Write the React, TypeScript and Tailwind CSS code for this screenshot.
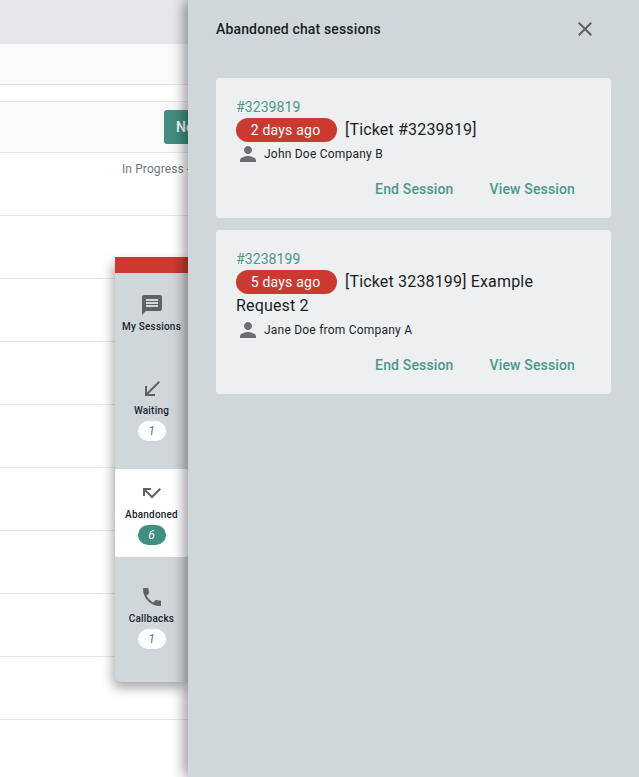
import React from "react";

const P = {
  message: "M20 2H4c-1.1 0-1.99.9-1.99 2L2 22l4-4h14c1.1 0 2-.9 2-2V4c0-1.1-.9-2-2-2zm-2 12H6v-2h12v2zm0-3H6V9h12v2zm0-3H6V6h12v2z",
  received: "M20 5.41L18.59 4 7 15.59V9H5v10h10v-2H8.41z",
  missed: "M19.59 7L12 14.59 6.41 9H11V7H3v8h2v-4.59l7 7 9-9z",
  phone: "M6.62 10.79c1.44 2.83 3.76 5.14 6.59 6.59l2.2-2.2c.27-.27.67-.36 1.02-.24 1.12.37 2.33.57 3.57.57.55 0 1 .45 1 1V20c0 .55-.45 1-1 1-9.39 0-17-7.61-17-17 0-.55.45-1 1-1h3.5c.55 0 1 .45 1 1 0 1.25.2 2.45.57 3.57.11.35.03.74-.25 1.02l-2.2 2.2z",
  person: "M12 12c2.21 0 4-1.79 4-4s-1.79-4-4-4-4 1.79-4 4 1.79 4 4 4zm0 2c-2.67 0-8 1.79-8 4v2h16v-2c0-2.21-5.33-4-8-4z",
  close: "M19 6.41L17.59 5 12 10.59 6.41 5 5 6.41 10.59 12 5 17.59 6.41 19 12 13.41 17.59 19 19 17.59 13.41 12z",
};

function Icon({ d, className }: { d: string; className: string }) {
  return (
    <svg viewBox="0 0 24 24" className={className} fill="currentColor">
      <path d={d} />
    </svg>
  );
}

function RailItem({
  icon, label, count, active, className,
}: { icon: string; label: string; count?: string; active?: boolean; className: string }) {
  return (
    <div className={`flex flex-col items-center ${active ? "bg-white rounded-[2px]" : ""} ${className}`}>
      <Icon d={icon} className="w-6 h-6 text-[#5f6368]" />
      <div className="text-[10px] leading-[14px] font-medium text-[#1c2430] mt-[3px] tracking-[0.2px]">{label}</div>
      {count && (
        <div className={`mt-[3px] w-7 h-5 rounded-full flex items-center justify-center text-[12px] italic ${active ? "bg-[#418f80] text-white" : "bg-white text-[#3d7f8c]"}`}>
          {count}
        </div>
      )}
    </div>
  );
}

function Card({ id, age, title, person }: { id: string; age: string; title: string; person: string }) {
  return (
    <div className="bg-[#edeff1] rounded-[4px] pl-5 pr-9 pt-[20px] pb-[19px]">
      <div className="text-[14px] leading-[18px] mb-[2px] text-[#4a9a8c] tracking-[0.1px]">{id}</div>
      <div className="text-[16px] leading-6 text-[#1a1f24] tracking-[0.17px]">
        <span className="inline-block align-top w-[101px] h-6 pr-[2px] rounded-full bg-[#cb3a30] text-white text-[14px] leading-6 text-center mr-2 tracking-[0.22px]">{age}</span>
        {title}
      </div>
      <div className="flex items-center h-6 text-[12px] text-[#1a1f24] tracking-[0.22px]">
        <Icon d={P.person} className="w-6 h-6 text-[#6a6e73] mr-1" />
        {person}
      </div>
      <div className="flex justify-end gap-9 mt-[13px] text-[14px] leading-5 font-medium text-[#4c998b] tracking-[0.15px]">
        <span>End Session</span>
        <span>View Session</span>
      </div>
    </div>
  );
}

export default function App() {
  return (
    <div className="relative h-[777px] w-[639px] overflow-hidden bg-white font-['Roboto',sans-serif]">
      <div className="h-11 bg-[#e5e7ea]" />
      <div className="h-[41px] bg-[#f8f9fb] border-b border-[#e4e6e8]" />
      <div className="h-[17px] bg-white border-b border-[#e4e6e8]" />
      <div className="h-[51px] bg-[#f8f9fb] border-b border-[#e4e6e8] flex items-center pl-[164px]">
        <div className="w-[48px] h-[34px] bg-[#418f80] rounded-[3px] text-white text-[14px] font-medium pl-3 leading-[34px] overflow-hidden shrink-0">New</div>
      </div>
      <div className="h-[63px] border-b border-[#e4e6e8] pt-[8px] pl-[122px] text-[12px] leading-4 text-[#6f7780] whitespace-nowrap tracking-[0.1px]">In Progress - Open</div>
      {[0, 1, 2, 3, 4, 5, 6, 7].map((i) => (
        <div key={i} className="h-[63px] border-b border-[#e4e6e8]" />
      ))}

      <div className="absolute left-[115px] top-[257px] w-[73px] h-[425px] bg-[#d0d7da] rounded-bl-[6px] shadow-[-2px_6px_12px_rgba(0,0,0,0.35)]">
        <div className="h-4 bg-[#cb3a30]" />
        <RailItem icon={P.message} label="My Sessions" className="pt-5" />
        <RailItem icon={P.received} label="Waiting" count="1" className="pt-[43px]" />
        <RailItem icon={P.missed} label="Abandoned" count="6" active className="mt-[28px] pt-3 h-[88px]" />
        <RailItem icon={P.phone} label="Callbacks" count="1" className="pt-[28px]" />
      </div>

      <div className="absolute right-0 top-0 bottom-0 w-[451px] bg-[#d0d7da] shadow-[-4px_0_12px_rgba(0,0,0,0.4)] pl-7 pr-7">
        <div className="flex items-center justify-between h-[58px]">
          <div className="text-[14px] font-medium text-[#1a1f24] tracking-[0.15px]">Abandoned chat sessions</div>
          <Icon d={P.close} className="w-6 h-6 text-[#5f6368] mr-[14px]" />
        </div>
        <div className="mt-5 flex flex-col gap-3">
          <Card id="#3239819" age="2 days ago" title="[Ticket #3239819]" person="John Doe Company B" />
          <Card id="#3238199" age="5 days ago" title="[Ticket 3238199] Example Request 2" person="Jane Doe from Company A" />
        </div>
      </div>
    </div>
  );
}
